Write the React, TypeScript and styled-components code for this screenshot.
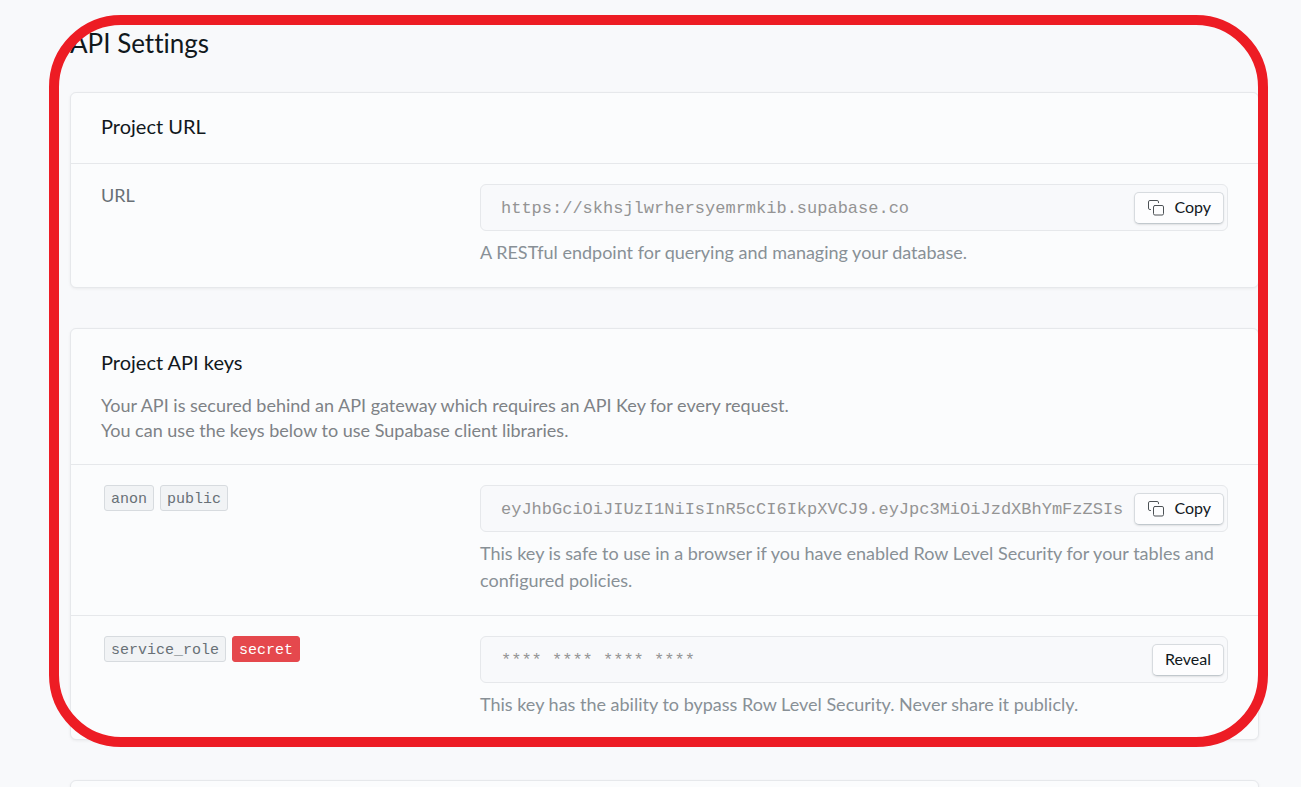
import React from "react";
import styled, { createGlobalStyle } from "styled-components";

const sans = `Lato, "Liberation Sans", sans-serif`;
const mono = `"Liberation Mono", "DejaVu Sans Mono", monospace`;

const GlobalStyle = createGlobalStyle`
  *, *::before, *::after { box-sizing: border-box; }
  body {
    margin: 0;
    background: #f8f9fb;
    color: #11181c;
    font-family: ${sans};
    font-variant-ligatures: none;
  }
  h1, h2, p { margin: 0; font-weight: 400; }
`;

const Page = styled.main`
  display: flex;
  flex-direction: column;
  gap: 40px;
  height: 100vh;
  overflow: hidden;
  padding: 0 42px 0 70px;
`;

const Highlighted = styled.div`
  position: relative;
  flex: none;
  display: flex;
  flex-direction: column;
  gap: 40px;
`;

const HighlightFrame = styled.div`
  position: absolute;
  top: 15px;
  right: -9px;
  bottom: -7px;
  left: -21px;
  border: 10px solid #ed1c24;
  border-radius: 72px;
  pointer-events: none;
`;

const Intro = styled.section`
  display: flex;
  flex-direction: column;
  gap: 34px;
  padding-top: 28px;
`;

const PageTitle = styled.h1`
  font-size: 26px;
  line-height: 30px;
`;

const Card = styled.section`
  flex: none;
  background: #fbfcfd;
  border: 1px solid #e6e8eb;
  border-radius: 6px;
  box-shadow: 0 1px 3px rgba(0, 0, 0, 0.06);
`;

const CardHeader = styled.header`
  display: flex;
  flex-direction: column;
  gap: 17px;
  min-height: 70px;
  padding: 19px 30px 21px;
`;

const CardTitle = styled.h2`
  font-size: 20px;
  line-height: 28px;
`;

const CardText = styled.p`
  font-size: 18px;
  line-height: 25px;
  color: #7e8286;
`;

const Row = styled.div`
  display: grid;
  grid-template-columns: 1fr 2fr;
  column-gap: 5px;
  padding: 20px 30px 21px;
  border-top: 1px solid #e6e8eb;
`;

const Label = styled.label`
  align-self: start;
  font-size: 18px;
  line-height: 23px;
  color: #687076;
`;

const Tags = styled.label`
  display: flex;
  align-self: start;
  gap: 6px;
  padding-left: 3px;
`;

const Tag = styled.code<{ $danger?: boolean }>`
  height: 26px;
  padding: 1px 6px 0;
  border: 1px solid ${(p) => (p.$danger ? "#e5484d" : "#d7dbdf")};
  border-radius: 3px;
  background: ${(p) => (p.$danger ? "#e5484d" : "#f1f3f5")};
  color: ${(p) => (p.$danger ? "#ffffff" : "#687076")};
  font-family: ${mono};
  font-size: 15px;
  line-height: 25px;
`;

const Control = styled.div`
  display: flex;
  flex-direction: column;
  gap: 8px;
  min-width: 0;
`;

const Field = styled.div`
  display: flex;
  padding: 7px 3px 6px 20px;
  border: 1px solid #e6e8eb;
  border-radius: 6px;
  background: #f8f9fb;
`;

const FieldInput = styled.input`
  flex: 1;
  min-width: 0;
  padding: 0;
  border: 0;
  outline: 0;
  background: transparent;
  color: #949494;
  font-family: ${mono};
  font-size: 17px;
`;

const Button = styled.button`
  display: flex;
  align-items: center;
  gap: 9px;
  height: 32px;
  padding: 0 12px 3px;
  border: 1px solid #d7dbdf;
  border-bottom-color: #c1c8cd;
  border-radius: 5px;
  background: #fdfdfe;
  box-shadow: 0 1px 2px rgba(0, 0, 0, 0.1);
  color: #11181c;
  font-family: ${sans};
  font-size: 16px;
  line-height: 24px;
  cursor: pointer;
`;

const IconSlot = styled.span`
  display: flex;
  padding-top: 2px;
`;

const Hint = styled.p`
  font-size: 18px;
  line-height: 27px;
  color: #889096;
`;

function CopyIcon() {
  return (
    <IconSlot aria-hidden>
      <svg width="18" height="18" viewBox="0 0 18 18" fill="none" stroke="#4c5155" strokeLinecap="round">
        <path d="M3.5 10.5h-.6a1.4 1.4 0 0 1-1.4-1.4V2.9a1.4 1.4 0 0 1 1.4-1.4h7.2a1.4 1.4 0 0 1 1.4 1.4v.8" />
        <rect x="6.5" y="6.5" width="10" height="9.500" rx="1.4" />
      </svg>
    </IconSlot>
  );
}

interface KeyFieldProps {
  id: string;
  value: string;
  hint: string;
  action: "copy" | "reveal";
}

function KeyField({ id, value, hint, action }: KeyFieldProps) {
  return (
    <Control>
      <Field>
        <FieldInput id={id} value={value} readOnly aria-describedby={`${id}-hint`} />
        <Button type="button">
          {action === "copy" ? (
            <>
              <CopyIcon />
              Copy
            </>
          ) : (
            "Reveal"
          )}
        </Button>
      </Field>
      <Hint id={`${id}-hint`}>{hint}</Hint>
    </Control>
  );
}

export default function App() {
  return (
    <>
      <GlobalStyle />
      <Page>
        <Highlighted>
          <Intro>
            <PageTitle>API Settings</PageTitle>
            <Card>
              <CardHeader>
                <CardTitle>Project URL</CardTitle>
              </CardHeader>
              <Row>
                <Label htmlFor="project-url">URL</Label>
                <KeyField
                  id="project-url"
                  value="https://skhsjlwrhersyemrmkib.supabase.co"
                  hint="A RESTful endpoint for querying and managing your database."
                  action="copy"
                />
              </Row>
            </Card>
          </Intro>
          <Card>
            <CardHeader>
              <CardTitle>Project API keys</CardTitle>
              <CardText>
                Your API is secured behind an API gateway which requires an API Key for every request.
                <br />
                You can use the keys below to use Supabase client libraries.
              </CardText>
            </CardHeader>
            <Row>
              <Tags htmlFor="anon-key">
                <Tag>anon</Tag>
                <Tag>public</Tag>
              </Tags>
              <KeyField
                id="anon-key"
                value="eyJhbGciOiJIUzI1NiIsInR5cCI6IkpXVCJ9.eyJpc3MiOiJzdXBhYmFzZSIs"
                hint="This key is safe to use in a browser if you have enabled Row Level Security for your tables and configured policies."
                action="copy"
              />
            </Row>
            <Row>
              <Tags htmlFor="service-key">
                <Tag>service_role</Tag>
                <Tag $danger>secret</Tag>
              </Tags>
              <KeyField
                id="service-key"
                value="**** **** **** ****"
                hint="This key has the ability to bypass Row Level Security. Never share it publicly."
                action="reveal"
              />
            </Row>
          </Card>
          <HighlightFrame />
        </Highlighted>
        <Card>
          <CardHeader />
        </Card>
      </Page>
    </>
  );
}
